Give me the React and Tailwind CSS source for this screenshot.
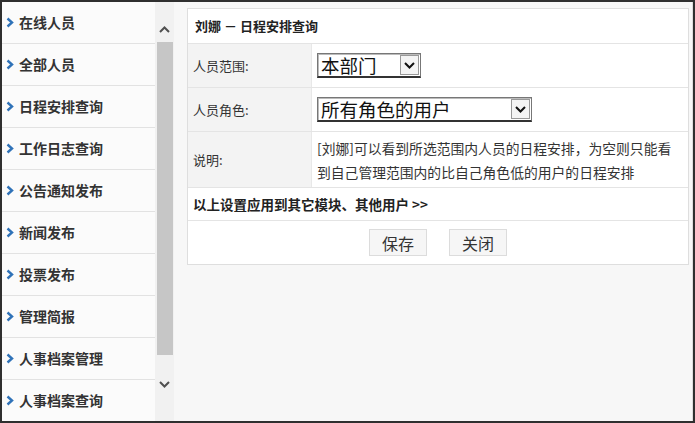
const menu = [
  '在线人员',
  '全部人员',
  '日程安排查询',
  '工作日志查询',
  '公告通知发布',
  '新闻发布',
  '投票发布',
  '管理简报',
  '人事档案管理',
  '人事档案查询',
]

const font = { fontFamily: '"Noto Sans CJK SC", "Liberation Sans", sans-serif' }

export default function App() {
  return (
    <div
      className="w-[695px] h-[423px] border-2 border-[#2f2f2f] flex bg-white overflow-hidden text-[#222]"
      style={font}
    >
      <Sidebar />
      <Scrollbar />
      <div className="flex-1 bg-[#f7f7f7] pl-[13px] pt-[6px] border-r border-[#dcdcdc]">
        <Panel />
      </div>
    </div>
  )
}

function Sidebar() {
  return (
    <div className="w-[153px] flex flex-col bg-[#fbfbfb]">
      {menu.map(item => (
        <div
          key={item}
          className="h-[42px] shrink-0 flex items-center gap-[5px] pl-[4px] border-b border-[#e2e2e2] text-[14px] font-bold text-[#333]"
        >
          <svg width="8" height="11" viewBox="0 0 8 11">
            <path d="M1.5 1.5 L6 5.5 L1.5 9.5" fill="none" stroke="#2f72b8" strokeWidth="2.4" />
          </svg>
          <span>{item}</span>
        </div>
      ))}
    </div>
  )
}

function Scrollbar() {
  return (
    <div className="w-[19px] bg-[#f1f1f1] flex flex-col items-center">
      <div className="h-[40px] flex items-center justify-center pt-[14px]">
        <svg width="11" height="7" viewBox="0 0 11 7">
          <path d="M1 6 L5.5 1.5 L10 6" fill="none" stroke="#505050" strokeWidth="2" />
        </svg>
      </div>
      <div className="w-[16px] h-[313px] bg-[#c6c6c6]" />
      <div className="flex-1 flex items-center justify-center pb-[8px]">
        <svg width="11" height="7" viewBox="0 0 11 7">
          <path d="M1 1 L5.5 5.5 L10 1" fill="none" stroke="#505050" strokeWidth="2" />
        </svg>
      </div>
    </div>
  )
}

function Panel() {
  return (
    <div className="w-[502px] border border-[#dedede] bg-white text-[13px]">
      <div className="h-[35px] flex items-center pl-[7px] font-bold border-b border-[#e4e4e4]">
        刘娜 － 日程安排查询
      </div>
      <Row label="人员范围:" height="h-[44px]">
        <Select text="本部门" width="w-[104px]" />
      </Row>
      <Row label="人员角色:" height="h-[44px]">
        <Select text="所有角色的用户" width="w-[215px]" />
      </Row>
      <Row label="说明:" height="h-[56px]">
        <p className="text-[13.8px] leading-[24px] text-[#333] whitespace-nowrap">
          [刘娜]可以看到所选范围内人员的日程安排，为空则只能看
          <br />
          到自己管理范围内的比自己角色低的用户的日程安排
        </p>
      </Row>
      <div className="h-[33px] flex items-center pl-[5px] font-bold text-[13.5px] border-b border-[#e4e4e4]">
        以上设置应用到其它模块、其他用户 &gt;&gt;
      </div>
      <div className="h-[43px] flex items-center justify-center gap-[22px]">
        <Button>保存</Button>
        <Button>关闭</Button>
      </div>
    </div>
  )
}

function Row({ label, height, children }) {
  return (
    <div className={`${height} flex border-b border-[#e4e4e4]`}>
      <div className="w-[124px] shrink-0 bg-[#f3f3f3] flex items-center pl-[5px] text-[#333] border-r border-[#e8e8e8]">
        {label}
      </div>
      <div className="flex-1 flex items-center pl-[5px]">{children}</div>
    </div>
  )
}

function Select({ text, width }) {
  return (
    <div
      className={`${width} h-[25px] flex items-center justify-between border border-[#777] border-b-2 border-b-[#333] bg-white shadow-[inset_1px_1px_0_#bbb]`}
    >
      <span className="text-[18.5px] leading-none pl-[3px] text-[#111]">{text}</span>
      <div className="w-[19px] h-[20px] mr-[1px] border border-[#999] bg-[#f4f4f4] flex items-center justify-center">
        <svg width="11" height="7" viewBox="0 0 11 7">
          <path d="M1 1 L5.5 5.5 L10 1" fill="none" stroke="#111" strokeWidth="2" />
        </svg>
      </div>
    </div>
  )
}

function Button({ children }) {
  return (
    <button className="w-[58px] h-[27px] bg-[#f6f6f6] border border-[#dcdcdc] text-[16px] text-[#333] leading-none">
      {children}
    </button>
  )
}
